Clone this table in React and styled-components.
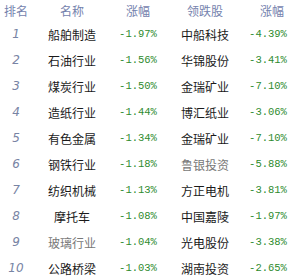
import styled, { createGlobalStyle } from "styled-components";

const GlobalStyle = createGlobalStyle`
  body {
    margin: 0;
    background: #fff;
    font-family: "Noto Sans CJK SC", "Noto Sans", sans-serif;
  }
`;

const Board = styled.div`
  width: 294px;
  height: 277px;
  overflow: hidden;
  background: #fff;
`;

const Row = styled.div`
  display: grid;
  grid-template-columns: 32px 80px 52px 82px 48px;
  height: ${(p) => (p.$head ? "21px" : "26px")};
  align-items: center;
`;

const HeadCell = styled.div`
  text-align: center;
  font-size: 12px;
  color: #7482ad;
  padding-left: ${(p) => p.$shift || 0}px;
`;

const Rank = styled.div`
  text-align: center;
  font-family: "DejaVu Sans", sans-serif;
  font-style: italic;
  font-size: 12px;
  color: #7884a4;
`;

const Name = styled.div`
  text-align: center;
  font-size: 12px;
  color: ${(p) => (p.$dim ? "#777" : "#1a1a1a")};
`;

const Pct = styled.div`
  text-align: center;
  font-family: "Liberation Mono", monospace;
  font-size: 10.5px;
  color: #2e8b2e;
  padding-right: ${(p) => p.$pull || 0}px;
`;

const rows = [
  ["1", "船舶制造", "-1.97%", "中船科技", "-4.39%"],
  ["2", "石油行业", "-1.56%", "华锦股份", "-3.41%"],
  ["3", "煤炭行业", "-1.50%", "金瑞矿业", "-7.10%"],
  ["4", "造纸行业", "-1.44%", "博汇纸业", "-3.06%"],
  ["5", "有色金属", "-1.34%", "金瑞矿业", "-7.10%"],
  ["6", "钢铁行业", "-1.18%", "鲁银投资", "-5.88%", false, true],
  ["7", "纺织机械", "-1.13%", "方正电机", "-3.81%"],
  ["8", "摩托车", "-1.08%", "中国嘉陵", "-1.97%"],
  ["9", "玻璃行业", "-1.04%", "光电股份", "-3.38%", true],
  ["10", "公路桥梁", "-1.03%", "湖南投资", "-2.65%"],
];

export default function App() {
  return (
    <Board>
      <GlobalStyle />
      <Row $head>
        <HeadCell>排名</HeadCell>
        <HeadCell>名称</HeadCell>
        <HeadCell>涨幅</HeadCell>
        <HeadCell>领跌股</HeadCell>
        <HeadCell $shift={4}>涨幅</HeadCell>
      </Row>
      {rows.map(([rank, name, pct, stock, spct, dimName, dimStock]) => (
        <Row key={rank}>
          <Rank>{rank}</Rank>
          <Name $dim={dimName}>{name}</Name>
          <Pct>{pct}</Pct>
          <Name $dim={dimStock}>{stock}</Name>
          <Pct $pull={4}>{spct}</Pct>
        </Row>
      ))}
    </Board>
  );
}
